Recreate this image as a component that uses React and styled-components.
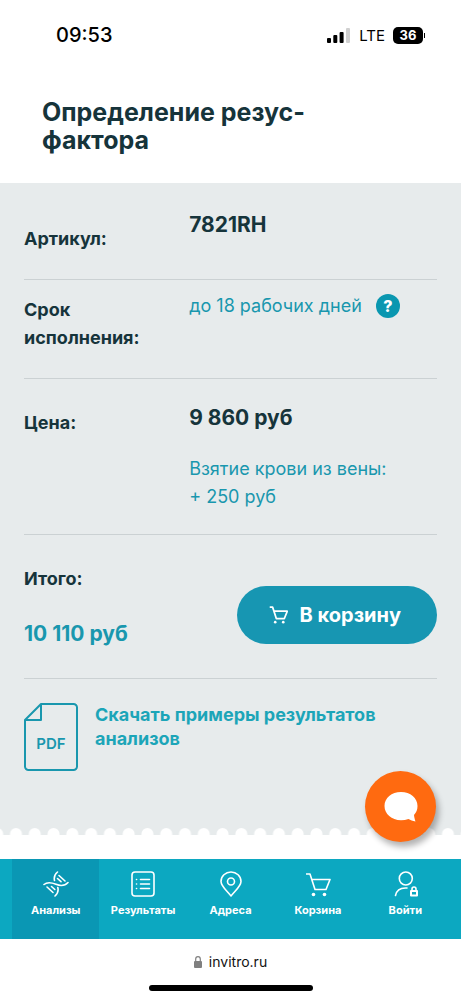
import styled, { createGlobalStyle } from "styled-components";

const GlobalStyle = createGlobalStyle`
  * {
    box-sizing: border-box;
  }
  body {
    margin: 0;
    background-color: #ffffff;
    color: #16343b;
    font-family: "Inter", "Noto Sans", sans-serif;
  }
`;

const Page = styled.div`
  display: flex;
  flex-direction: column;
  min-height: 100vh;
`;

const StatusBar = styled.header`
  display: flex;
  justify-content: space-between;
  align-items: center;
  height: 70px;
  padding: 0 36px 0 56px;
  color: #000000;
`;

const Time = styled.time`
  font-size: 20px;
  font-weight: 500;
`;

const StatusIcons = styled.div`
  display: flex;
  align-items: center;
  gap: 8px;
  font-size: 15px;
`;

const Battery = styled.span`
  display: flex;
  align-items: center;
  gap: 1px;
  &::after {
    content: "";
    width: 1px;
    height: 5px;
    background-color: #000000;
  }
`;

const BatteryLevel = styled.span`
  width: 30px;
  border-radius: 5px;
  background-color: #000000;
  color: #ffffff;
  font-size: 13px;
  font-weight: 700;
  line-height: 17px;
  text-align: center;
`;

const Title = styled.h1`
  margin: 0;
  padding: 28px 42px 29px;
  font-size: 25px;
  font-weight: 700;
  line-height: 28px;
`;

const Panel = styled.main`
  position: relative;
  flex: 1;
  display: flex;
  flex-direction: column;
  justify-content: space-between;
  background-color: #e7ebec;
`;

const Details = styled.div`
  padding: 0 24px;
`;

const List = styled.dl`
  margin: 0;
`;

const Row = styled.div`
  display: grid;
  grid-template-columns: 2fr 3fr;
  padding: ${(props) => props.$padding};
  border-bottom: 1px solid #cbd1d3;
`;

const Label = styled.dt`
  padding-top: ${(props) => props.$drop || "0"};
  font-size: 18px;
  font-weight: 700;
  line-height: 28px;
`;

const Value = styled.dd`
  margin: 0;
  font-size: 21px;
  font-weight: 700;
  line-height: 28px;
`;

const Note = styled.p`
  display: flex;
  align-items: center;
  gap: 14px;
  margin: ${(props) => props.$margin || "0"};
  color: #1997ae;
  font-size: 18px;
  font-weight: 400;
`;

const HelpButton = styled.button`
  width: 24px;
  height: 24px;
  padding: 0;
  border: none;
  border-radius: 50%;
  background-color: #0a97b0;
  color: #ffffff;
  font: inherit;
  font-size: 16px;
  font-weight: 800;
  line-height: 24px;
`;

const Total = styled.section`
  display: flex;
  justify-content: space-between;
  align-items: center;
  padding: 30px 0;
  border-bottom: 1px solid #cbd1d3;
`;

const TotalLabel = styled.h2`
  margin: 0 0 27px;
  font-size: 18px;
  font-weight: 700;
  line-height: 28px;
`;

const TotalPrice = styled.p`
  margin: 0;
  color: #1997ae;
  font-size: 21px;
  font-weight: 700;
  line-height: 28px;
`;

const CartButton = styled.button`
  display: flex;
  align-items: center;
  gap: 12px;
  height: 58px;
  margin-top: 16px;
  padding: 0 36px 0 32px;
  border: none;
  border-radius: 29px;
  background-color: #1796b2;
  color: #ffffff;
  font: inherit;
  font-size: 20px;
  font-weight: 700;
`;

const Download = styled.a`
  display: flex;
  gap: 17px;
  padding: 24px 0;
  color: #1ca5b8;
  font-size: 18px;
  font-weight: 700;
  line-height: 24px;
  text-decoration: none;
`;

const PdfIcon = styled.svg`
  flex: none;
  width: 54px;
  height: 68px;
`;

const TornEdge = styled.svg`
  display: block;
  width: 100%;
  height: 7px;
`;

const ChatButton = styled.button`
  position: absolute;
  right: 25px;
  bottom: -7px;
  display: flex;
  justify-content: center;
  align-items: center;
  width: 71px;
  height: 71px;
  padding: 0;
  border: none;
  border-radius: 50%;
  background-color: #ff6a10;
  box-shadow: 3px 5px 6px rgba(0, 0, 0, 0.3);
`;

const Nav = styled.nav`
  display: flex;
  margin-top: 24px;
  padding: 0 12px;
  background-color: #0ca8c1;
`;

const NavLink = styled.a`
  flex: 1 1 0;
  display: flex;
  flex-direction: column;
  align-items: center;
  gap: 4px;
  height: 80px;
  padding-top: 12px;
  background-color: ${(props) => (props.$active ? "#0a97b4" : "transparent")};
  color: #ffffff;
  font-size: 11px;
  font-weight: 700;
  line-height: 18px;
  text-decoration: none;
`;

const BrowserBar = styled.footer`
  display: flex;
  flex-direction: column;
  align-items: center;
  gap: 13px;
  padding: 13px 0 9px;
  color: #111111;
`;

const Address = styled.div`
  display: flex;
  align-items: center;
  gap: 7px;
  font-size: 14px;
  line-height: 20px;
`;

const HomeIndicator = styled.div`
  width: 164px;
  height: 6px;
  border-radius: 3px;
  background-color: #000000;
`;

const SignalIcon = () => (
  <svg width="24" height="15" viewBox="0 0 24 15" aria-hidden="true">
    <rect x="0" y="10" width="4" height="5" rx="1" />
    <rect x="6.3" y="7" width="4" height="8" rx="1" />
    <rect x="12.6" y="4" width="4" height="11" rx="1" />
    <rect x="19" y="0" width="4" height="15" rx="1" fill="#d0d0d0" />
  </svg>
);

const CartIcon = ({ size, stroke }) => (
  <svg
    width={size}
    height={size}
    viewBox="0 0 26 26"
    fill="none"
    stroke="#ffffff"
    strokeWidth={stroke}
    strokeLinejoin="round"
    aria-hidden="true"
  >
    <path d="M1 3h4l5 15.500h11L25 8.500H7" />
    <circle cx="8.500" cy="23.500" r="1.800" fill="#ffffff" stroke="none" />
    <circle cx="19.500" cy="23.500" r="1.800" fill="#ffffff" stroke="none" />
  </svg>
);

const NavIcon = ({ children }) => (
  <svg
    width="26"
    height="26"
    viewBox="0 0 26 26"
    fill="none"
    stroke="#ffffff"
    strokeWidth="1.6"
    strokeLinecap="round"
    strokeLinejoin="round"
    aria-hidden="true"
  >
    {children}
  </svg>
);

const navItems = [
  {
    title: "Анализы",
    active: true,
    icon: (
      <NavIcon>
        <path d="M1 13.500C4.500 10.500 8.500 11.500 13 13.300s8.500 2 12-1.800" />
        <path d="M14.500 1C11.500 3.500 10.800 6.500 11.500 9.500" />
        <path d="M12 25C14.800 22.500 15.600 19.500 14.800 16.500" />
        <path d="M16 4.500l6 5.500M14.500 7.500l3.500 3.200M4 16l6 5.500M8.500 15.500l3.300 3" />
      </NavIcon>
    ),
  },
  {
    title: "Результаты",
    icon: (
      <NavIcon>
        <rect x="2" y="1" width="22" height="24" rx="3" />
        <path d="M10.500 8.500h9M10.500 13h9M10.500 17.500h9M6.500 8.500h.1M6.500 13h.1M6.500 17.500h.1" />
      </NavIcon>
    ),
  },
  {
    title: "Адреса",
    icon: (
      <NavIcon>
        <path d="M13 25C8 19 3 15 3 10.500a10 9.500 0 0 1 20 0C23 15 18 19 13 25z" />
        <circle cx="13" cy="10.500" r="3.500" />
      </NavIcon>
    ),
  },
  { title: "Корзина", icon: <CartIcon size={26} stroke={1.6} /> },
  {
    title: "Войти",
    icon: (
      <NavIcon>
        <circle cx="13.800" cy="7.500" r="6.500" />
        <path d="M3.500 24.500c1-5 5-8 11.500-7.500" />
        <rect x="19" y="20" width="6" height="4.500" strokeWidth="2" />
        <path d="M20 19.500v-1.500a2 2 0 0 1 4 0v1.500" />
      </NavIcon>
    ),
  },
];

const App = () => {
  return (
    <Page>
      <GlobalStyle />

      <StatusBar>
        <Time>09:53</Time>
        <StatusIcons>
          <SignalIcon />
          <span>LTE</span>
          <Battery>
            <BatteryLevel>36</BatteryLevel>
          </Battery>
        </StatusIcons>
      </StatusBar>

      <Title>
        Определение резус-
        <br />
        фактора
      </Title>

      <Panel>
        <Details>
          <List>
            <Row $padding="28px 0 26px">
              <Label $drop="14px">Артикул:</Label>
              <Value>7821RH</Value>
            </Row>
            <Row $padding="12px 0 26px">
              <Label $drop="4px">Срок исполнения:</Label>
              <Value>
                <Note>
                  до 18 рабочих дней
                  <HelpButton aria-label="Подробнее о сроке">?</HelpButton>
                </Note>
              </Value>
            </Row>
            <Row $padding="25px 0 23px">
              <Label $drop="5px">Цена:</Label>
              <Value>
                9 860 руб
                <Note $margin="23px 0 0">
                  Взятие крови из вены:
                  <br />+ 250 руб
                </Note>
              </Value>
            </Row>
          </List>

          <Total>
            <div>
              <TotalLabel>Итого:</TotalLabel>
              <TotalPrice>10 110 руб</TotalPrice>
            </div>
            <CartButton>
              <CartIcon size={19} stroke={2.4} />В корзину
            </CartButton>
          </Total>

          <Download href="#examples">
            <PdfIcon viewBox="0 0 54 68" fill="none" aria-hidden="true">
              <path
                d="M17 1h32.500a3.500 3.500 0 0 1 3.500 3.500v59a3.500 3.500 0 0 1-3.500 3.500h-45A3.500 3.500 0 0 1 1 63.500V17zM17 1v16H1"
                stroke="#1997ae"
                strokeWidth="2"
                strokeLinejoin="round"
              />
              <text
                x="27"
                y="46"
                fill="#1997ae"
                fontSize="15"
                fontWeight="600"
                textAnchor="middle"
              >
                PDF
              </text>
            </PdfIcon>
            Скачать примеры результатов анализов
          </Download>
        </Details>

        <TornEdge aria-hidden="true">
          <defs>
            <pattern
              id="scallop"
              x="6.600"
              width="18.780"
              height="7"
              patternUnits="userSpaceOnUse"
            >
              <circle cx="9.400" cy="6" r="6" fill="#ffffff" />
            </pattern>
          </defs>
          <rect width="100%" height="7" fill="url(#scallop)" />
        </TornEdge>

        <ChatButton aria-label="Чат">
          <svg width="34" height="30" viewBox="0 0 34 30" fill="#ffffff">
            <path d="M17 0c9.400 0 16.500 6 16.500 14 0 4-1.200 6.500-3.500 9 .2 2.400.8 4.300 1.500 6.500-3-.4-5-1.300-7-2.500-2.400.8-4.800 1.200-7.500 1.200C7.600 28.200.5 22 .5 14S7.600 0 17 0z" />
          </svg>
        </ChatButton>
      </Panel>

      <Nav>
        {navItems.map((item) => (
          <NavLink key={item.title} href="#" $active={item.active}>
            {item.icon}
            {item.title}
          </NavLink>
        ))}
      </Nav>

      <BrowserBar>
        <Address>
          <svg width="8" height="12" viewBox="0 0 8 12" aria-hidden="true">
            <rect y="5" width="8" height="7" rx="1" fill="#808080" />
            <path
              d="M1.700 5V3a2.300 2.300 0 0 1 4.600 0v2"
              fill="none"
              stroke="#808080"
              strokeWidth="1.200"
            />
          </svg>
          invitro.ru
        </Address>
        <HomeIndicator />
      </BrowserBar>
    </Page>
  );
};

export default App;
